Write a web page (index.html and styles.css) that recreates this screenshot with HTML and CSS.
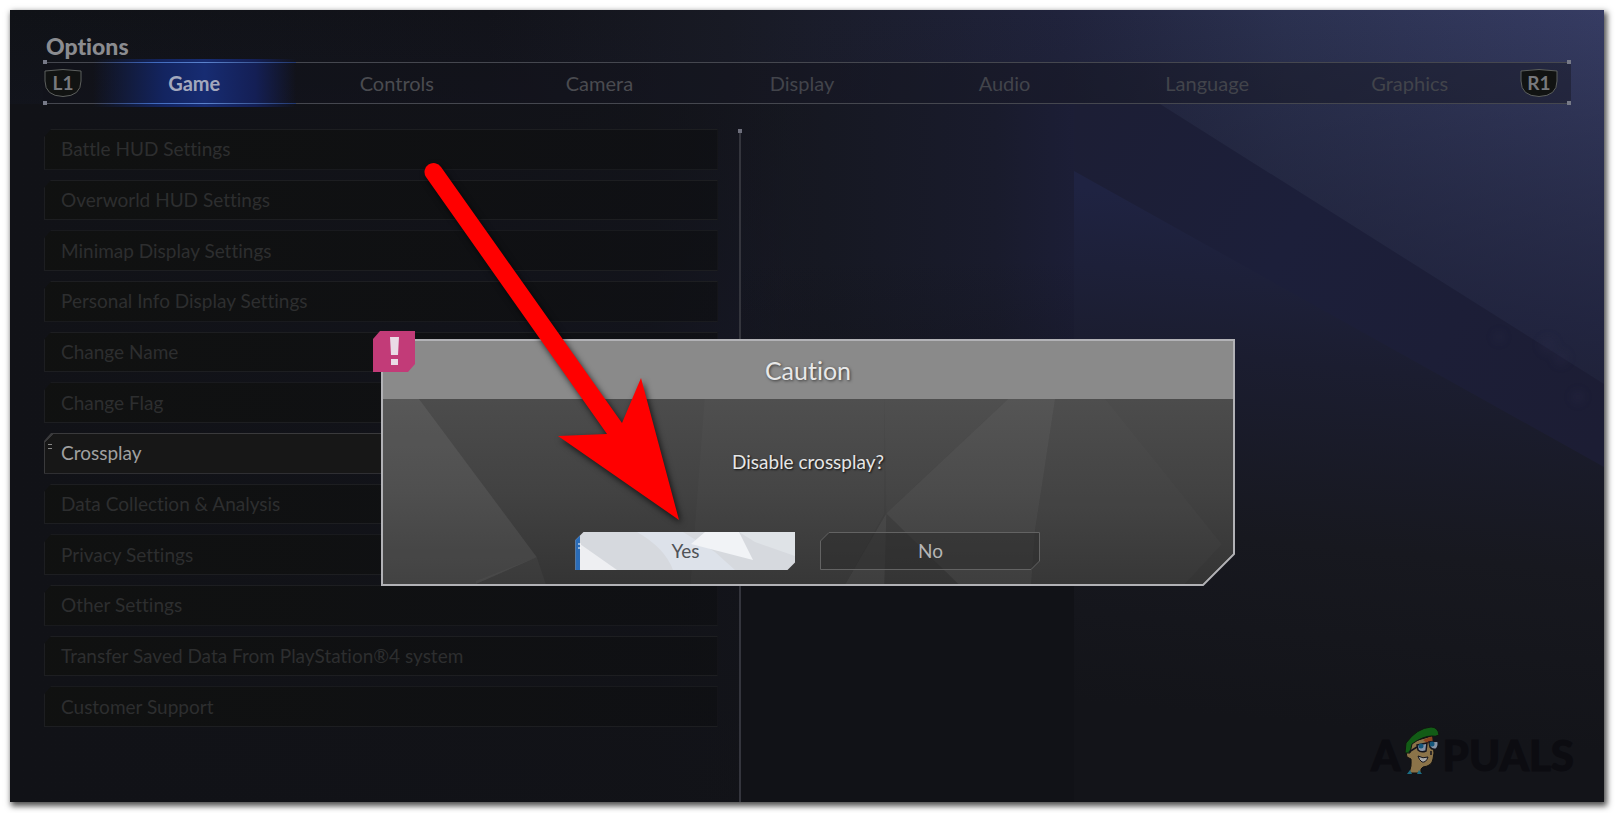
FILE: index.html
```html
<!DOCTYPE html>
<html lang="en">
<head>
<meta charset="utf-8">
<title>Options</title>
<link rel="stylesheet" href="styles.css">
</head>
<body>
<main class="screen">
  <svg class="backdrop" viewBox="10 10 1594 792" preserveAspectRatio="none" aria-hidden="true">
    <defs>
      <linearGradient id="base" x1="0" y1="0" x2="1" y2="0">
        <stop offset="0" stop-color="#101217"/><stop offset=".3" stop-color="#12131a"/>
        <stop offset=".45" stop-color="#181a24"/><stop offset=".66" stop-color="#20233c"/>
        <stop offset=".8" stop-color="#2b3150"/><stop offset="1" stop-color="#363c63"/>
      </linearGradient>
      <linearGradient id="fade" x1="0" y1="0" x2="0" y2="1">
        <stop offset="0" stop-color="#171928" stop-opacity="0"/><stop offset=".4" stop-color="#1b1d34" stop-opacity=".75"/>
        <stop offset=".7" stop-color="#15161e" stop-opacity=".9"/><stop offset="1" stop-color="#131419"/>
      </linearGradient>
      <linearGradient id="dusk" x1="0" y1="0" x2="1" y2="0">
        <stop offset="0" stop-color="#111217"/><stop offset=".4" stop-color="#111217" stop-opacity=".8"/><stop offset=".6" stop-color="#111217" stop-opacity="0"/>
      </linearGradient>
      <linearGradient id="beam" gradientUnits="userSpaceOnUse" x1="1074" y1="120" x2="1604" y2="430">
        <stop offset="0" stop-color="#1c1e35"/><stop offset=".4" stop-color="#1c1f3a"/><stop offset="1" stop-color="#1c1d34"/>
      </linearGradient>
      <linearGradient id="under" gradientUnits="userSpaceOnUse" x1="1110" y1="190" x2="1060" y2="700">
        <stop offset="0" stop-color="#1f2342"/><stop offset=".3" stop-color="#1b1d30"/><stop offset=".65" stop-color="#17181f"/><stop offset="1" stop-color="#131419"/>
      </linearGradient>
      <linearGradient id="mid" x1="0" y1="0" x2="1" y2="0">
        <stop offset="0" stop-color="#15161c" stop-opacity="0"/><stop offset=".25" stop-color="#161822"/><stop offset=".75" stop-color="#191b2c"/><stop offset="1" stop-color="#1c1e37"/>
      </linearGradient>
      <linearGradient id="sink" x1="0" y1="0" x2="0" y2="1">
        <stop offset="0" stop-color="#111217" stop-opacity="0"/><stop offset=".6" stop-color="#111217"/>
      </linearGradient>
      <filter id="soft"><feGaussianBlur stdDeviation="4"/></filter>
    </defs>
    <rect x="10" y="10" width="1594" height="792" fill="url(#base)"/>
    <rect x="10" y="10" width="1594" height="792" fill="url(#fade)"/>
    <rect x="10" y="104" width="1594" height="698" fill="url(#dusk)"/>
    <path d="M740 104H1080V802H740z" fill="url(#mid)"/>
    <rect x="740" y="260" width="334" height="542" fill="url(#sink)"/>
    <path d="M1074 104H1160L1604 384V480L1074 180z" fill="url(#beam)"/>
    <path d="M1074 171L1604 467V802H1074z" fill="url(#under)"/>
    <g fill="#2a2c48" opacity=".3" filter="url(#soft)"><circle cx="1499" cy="337" r="5"/><circle cx="1548" cy="345" r="8"/><circle cx="1561" cy="358" r="7"/><circle cx="1578" cy="397" r="6"/></g>
  </svg>

  <header class="head">
    <h1 class="title">Options</h1>
    <nav class="tabs" aria-label="Option categories">
      <button class="key key-l" type="button"><svg viewBox="0 0 40 30" aria-hidden="true"><path d="M2 3Q20 0 38 3V13Q38 28 20 28.500Q2 28 2 13z"/></svg><span>L1</span></button>
      <button class="tab on" type="button">Game</button>
      <button class="tab" type="button">Controls</button>
      <button class="tab" type="button">Camera</button>
      <button class="tab" type="button">Display</button>
      <button class="tab" type="button">Audio</button>
      <button class="tab" type="button">Language</button>
      <button class="tab" type="button">Graphics</button>
      <button class="key key-r" type="button"><svg viewBox="0 0 40 30" aria-hidden="true"><path d="M2 3Q20 0 38 3V13Q38 28 20 28.500Q2 28 2 13z"/></svg><span>R1</span></button>
    </nav>
  </header>

  <section class="columns">
    <ul class="list">
      <li><button class="item" type="button">Battle HUD Settings</button></li>
      <li><button class="item" type="button">Overworld HUD Settings</button></li>
      <li><button class="item" type="button">Minimap Display Settings</button></li>
      <li><button class="item" type="button">Personal Info Display Settings</button></li>
      <li><button class="item" type="button">Change Name</button></li>
      <li><button class="item" type="button">Change Flag</button></li>
      <li><button class="item current" type="button">Crossplay</button></li>
      <li><button class="item" type="button">Data Collection &amp; Analysis</button></li>
      <li><button class="item" type="button">Privacy Settings</button></li>
      <li><button class="item" type="button">Other Settings</button></li>
      <li><button class="item" type="button">Transfer Saved Data From PlayStation®4 system</button></li>
      <li><button class="item" type="button">Customer Support</button></li>
    </ul>
    <div class="detail"></div>
  </section>

  <div class="brand">
    <span>A</span>
    <svg viewBox="0 0 38 50" aria-hidden="true">
      <path d="M3 27L4 32L8 34Q9 41 6 48H18Q17 43 20 42Q29 41 30 34L31 28L29 11L8 17z" fill="#8b7349" stroke="#111" stroke-width="1"/>
      <path d="M20 15L29 11L30 18L24 18z" fill="#8a4320"/>
      <path d="M2 28L3 18Q14 3 28 2Q35 2 36 10Q32 12 29 11Q20 11 9 19L7 28z" fill="#125c16" stroke="#101510" stroke-width="1"/>
      <g fill="#8794a8" stroke="#14141c" stroke-width="1.500"><path d="M14 20L24 18L23 26Q18 28 15 25z"/><path d="M26 17L35 16Q36 22 33 24Q29 25 27 22z"/></g>
      <circle cx="18" cy="21" r="2.500" fill="#14567c"/><circle cx="29" cy="19" r="2.500" fill="#14567c"/>
      <path d="M6 27L14 22M28 26L28 30" stroke="#14141c" stroke-width="1.500" fill="none"/>
      <path d="M15 31Q20 34 25 32Q23 38 19 37Q16 35 15 31z" fill="#aaa" stroke="#14141c" stroke-width="1"/>
      <path d="M4 49L7 45L9 49zM14 49L16 45L19 49z" fill="#1b6d85"/>
    </svg>
    <span>PUALS</span>
  </div>

  <div class="overlay">
    <div class="dialog-wrap" role="dialog" aria-labelledby="dialog-title">
      <div class="dialog">
        <div class="panel">
          <h2 class="dialog-title" id="dialog-title">Caution</h2>
          <div class="dialog-body">
            <svg class="facets" viewBox="382 399 852 186" preserveAspectRatio="none" aria-hidden="true">
              <path d="M382 399H418L536 558L475 585H382z" fill="#fff" opacity=".07"/>
              <path d="M536 558L475 582V585H545z" fill="#fff" opacity=".03"/>
              <path d="M704 399H884V514L845 585H690z" fill="#fff" opacity=".02"/>
              <path d="M884 399H1008L886 514z" fill="#fff" opacity=".02"/>
              <path d="M1008 399H1055L1035 530L1031 585H958L886 514z" fill="#fff" opacity=".05"/>
              <path d="M886 514L884 585H845z" fill="#fff" opacity=".05"/>
              <path d="M1055 399H1105L1222 545L1185 585H1031L1035 530z" fill="#fff" opacity=".015"/>
            </svg>
            <p class="question">Disable crossplay?</p>
            <div class="actions">
              <button class="btn yes" type="button">
                <svg viewBox="0 0 220 38" preserveAspectRatio="none" aria-hidden="true">
                  <path d="M0 0H220V38H0z" fill="#d6d9de"/>
                  <path d="M5 12L42 38H5z" fill="#eeeff2"/>
                  <path d="M62 0H108L140 20L160 38H98Q90 16 62 0z" fill="#dde2ea"/>
                  <path d="M130 0H164L178 28L116 12z" fill="#f1f3f6"/>
                  <path d="M164 0H220V24L180 10z" fill="#dfe3e7"/>
                  <path d="M0 0H5V38H0z" fill="#2a6cb8"/>
                  <path d="M3 12h3M3 16h3" stroke="#fff"/>
                </svg>
                <span>Yes</span>
              </button>
              <button class="btn no" type="button">
                <svg viewBox="0 0 220 38" preserveAspectRatio="none" aria-hidden="true"><path d="M9 .5H219.500V29L211 37.500H.5V9z" fill="#2c2c2c" fill-opacity=".55" stroke="#636363"/></svg>
                <span>No</span>
              </button>
            </div>
          </div>
        </div>
      </div>
      <svg class="badge" viewBox="0 0 42 41" aria-hidden="true"><path d="M7 0H42V33L35 41H0V8z" fill="#c23b78"/><path d="M17 6h9l-1 18h-7zM18 28h7v6h-7z" fill="#eadbe6"/></svg>
    </div>
  </div>

  <svg class="arrow" viewBox="10 10 1594 792" preserveAspectRatio="none" aria-hidden="true">
    <path d="M607 434L426 177A9 9 0 0 1 441 167L622 423L641 378L679 520L558 436z"/>
  </svg>
</main>
</body>
</html>
```
FILE: styles.css
```css
* { box-sizing: border-box; }

body {
  margin: 0;
  padding: 10px 11px 11px 10px;
  min-height: 100vh;
  display: flex;
  background: #fff;
  font-family: "Lato", sans-serif;
  font-size: 19px;
  line-height: 28px;
  font-variant-ligatures: none;
}

button {
  margin: 0;
  padding: 0;
  border: 0;
  background: none;
  color: inherit;
  font: inherit;
  font-variant-ligatures: none;
}

h1, h2, p, ul { margin: 0; padding: 0; }

.screen {
  position: relative;
  flex: 1;
  display: flex;
  flex-direction: column;
  background: #111217;
  box-shadow: 2px 3px 6px 1px rgba(0, 0, 0, .7);
}

.backdrop, .arrow {
  position: absolute;
  inset: 0;
  width: 100%;
  height: 100%;
}

.arrow {
  pointer-events: none;
  fill: #f00;
  filter: drop-shadow(2px 3px 3px rgba(0, 0, 0, .7));
}

.head { position: relative; padding: 20px 33px 0; }

.title {
  padding-left: 3px;
  color: #8b8c90;
  font-size: 23px;
  line-height: 32px;
  font-weight: 900;
}

.tabs {
  position: relative;
  display: grid;
  grid-template-columns: 50px repeat(7, 1fr) 60px;
  height: 42px;
  border-top: 1px solid #45474f;
  border-bottom: 1px solid #45474f;
  background: rgba(18, 18, 26, .4);
}

.tabs::before, .tabs::after {
  content: "";
  position: absolute;
  top: -3px;
  width: 4px;
  height: 4px;
  background: #777a88;
  box-shadow: 0 41px #777a88;
}
.tabs::before { left: 0; }
.tabs::after { right: 0; }

.tab { font-size: 20px; color: #4a4b50; }
.tab:nth-child(n + 5) { color: #42444b; }

.tab.on {
  position: relative;
  color: #a3a8bd;
  font-weight: 700;
  margin: -4px 0;
  background: linear-gradient(90deg, transparent, #132460 35%, #172c72 55%, #141f55 80%, transparent);
}
.tab.on::before, .tab.on::after {
  content: "";
  position: absolute;
  left: 0;
  right: 0;
  height: 1px;
  background: linear-gradient(90deg, transparent, #3f69bd 30%, #5b82cc 55%, #22386f);
}
.tab.on::before { top: 3px; }
.tab.on::after { bottom: 3px; }

.key {
  position: relative;
  display: grid;
  place-items: center;
  width: 40px;
  color: #77797d;
  font-weight: 700;
  line-height: 24px;
}
.key svg { grid-area: 1 / 1; width: 40px; height: 30px; }
.key path { fill: #111312; stroke: #5d605e; stroke-width: 1; }
.key span { grid-area: 1 / 1; position: relative; }
.key-l { justify-self: start; }
.key-r { justify-self: start; margin-left: 8px; }

.columns {
  position: relative;
  flex: 1;
  display: flex;
  padding: 25px 0 0 34px;
}

.list {
  flex: 0 0 43.2%;
  display: grid;
  grid-auto-rows: 1fr;
  gap: 10px;
  margin-bottom: 75px;
  list-style: none;
}
.list li { display: grid; }

.item {
  min-height: 40px;
  padding: 0 16px;
  text-align: left;
  color: #2d2e2f;
  border: 1px solid #1d1e21;
  border-right-color: #15161a;
  background: linear-gradient(90deg, rgba(16, 17, 16, .9), rgba(14, 15, 18, .7));
  clip-path: polygon(7px 0, 100% 0, 100% 100%, 0 100%, 0 8px);
}

.item.current {
  color: #a0a0a0;
  border-color: #3a3a3c;
  background:
    linear-gradient(#888, #888) 3px 10px / 4px 1px no-repeat,
    linear-gradient(#888, #888) 3px 14px / 4px 1px no-repeat,
    linear-gradient(135deg, #3a3a3c 6px, #171717 6px);
}

.detail {
  position: relative;
  margin-left: 21px;
  border-left: 2px solid #34353d;
  flex: 1;
}
.detail::before {
  content: "";
  position: absolute;
  left: -3px;
  top: 0;
  width: 4px;
  height: 4px;
  background: #6d6e7b;
}

.brand {
  position: absolute;
  right: 30px;
  bottom: 17px;
  display: flex;
  align-items: center;
  gap: 1px;
  color: #0c0c11;
  font: 900 42px/50px "Lato", sans-serif;
  -webkit-text-stroke: 1px #0c0c11;
}
.brand svg { width: 40px; height: 50px; margin-bottom: 10px; }

.overlay {
  position: absolute;
  inset: 0;
  display: grid;
  place-items: center;
  padding: 113px 0 0 2px;
}

.dialog-wrap { position: relative; width: 53.7%; }

.dialog {
  padding: 2px;
  background: #b2b2b6;
  clip-path: polygon(0 0, 100% 0, 100% calc(100% - 32px), calc(100% - 32px) 100%, 0 100%);
}

.panel {
  background: #414141;
  clip-path: polygon(0 0, 100% 0, 100% calc(100% - 31px), calc(100% - 31px) 100%, 0 100%);
}

.dialog-title {
  padding: 12px 0;
  text-align: center;
  background: #8a8a8a;
  color: #e8e8e8;
  font-size: 25px;
  line-height: 34px;
  font-weight: 400;
  text-shadow: 1px 1px 3px rgba(0, 0, 0, .6);
}

.dialog-body {
  position: relative;
  padding: 49px 0 14px;
  text-align: center;
  background: linear-gradient(#4c4c4c, #424242 50%, #343434);
}

.facets { position: absolute; inset: 0; width: 100%; height: 100%; }

.question {
  position: relative;
  color: #e6e6e6;
  text-shadow: 1px 1px 2px rgba(0, 0, 0, .8);
}

.actions {
  position: relative;
  display: flex;
  justify-content: center;
  gap: 25px;
  margin-top: 56px;
}

.btn {
  display: grid;
  place-items: center;
  width: 220px;
  height: 38px;
}
.btn svg { grid-area: 1 / 1; width: 100%; height: 100%; }
.btn span { grid-area: 1 / 1; position: relative; }

.yes {
  color: #4f5257;
  clip-path: polygon(8px 0, 100% 0, 100% 30px, calc(100% - 8px) 100%, 0 100%, 0 8px);
}
.no { color: #b5b5b5; }

.badge {
  position: absolute;
  left: -8px;
  top: -8px;
  width: 42px;
  height: 41px;
}
```
